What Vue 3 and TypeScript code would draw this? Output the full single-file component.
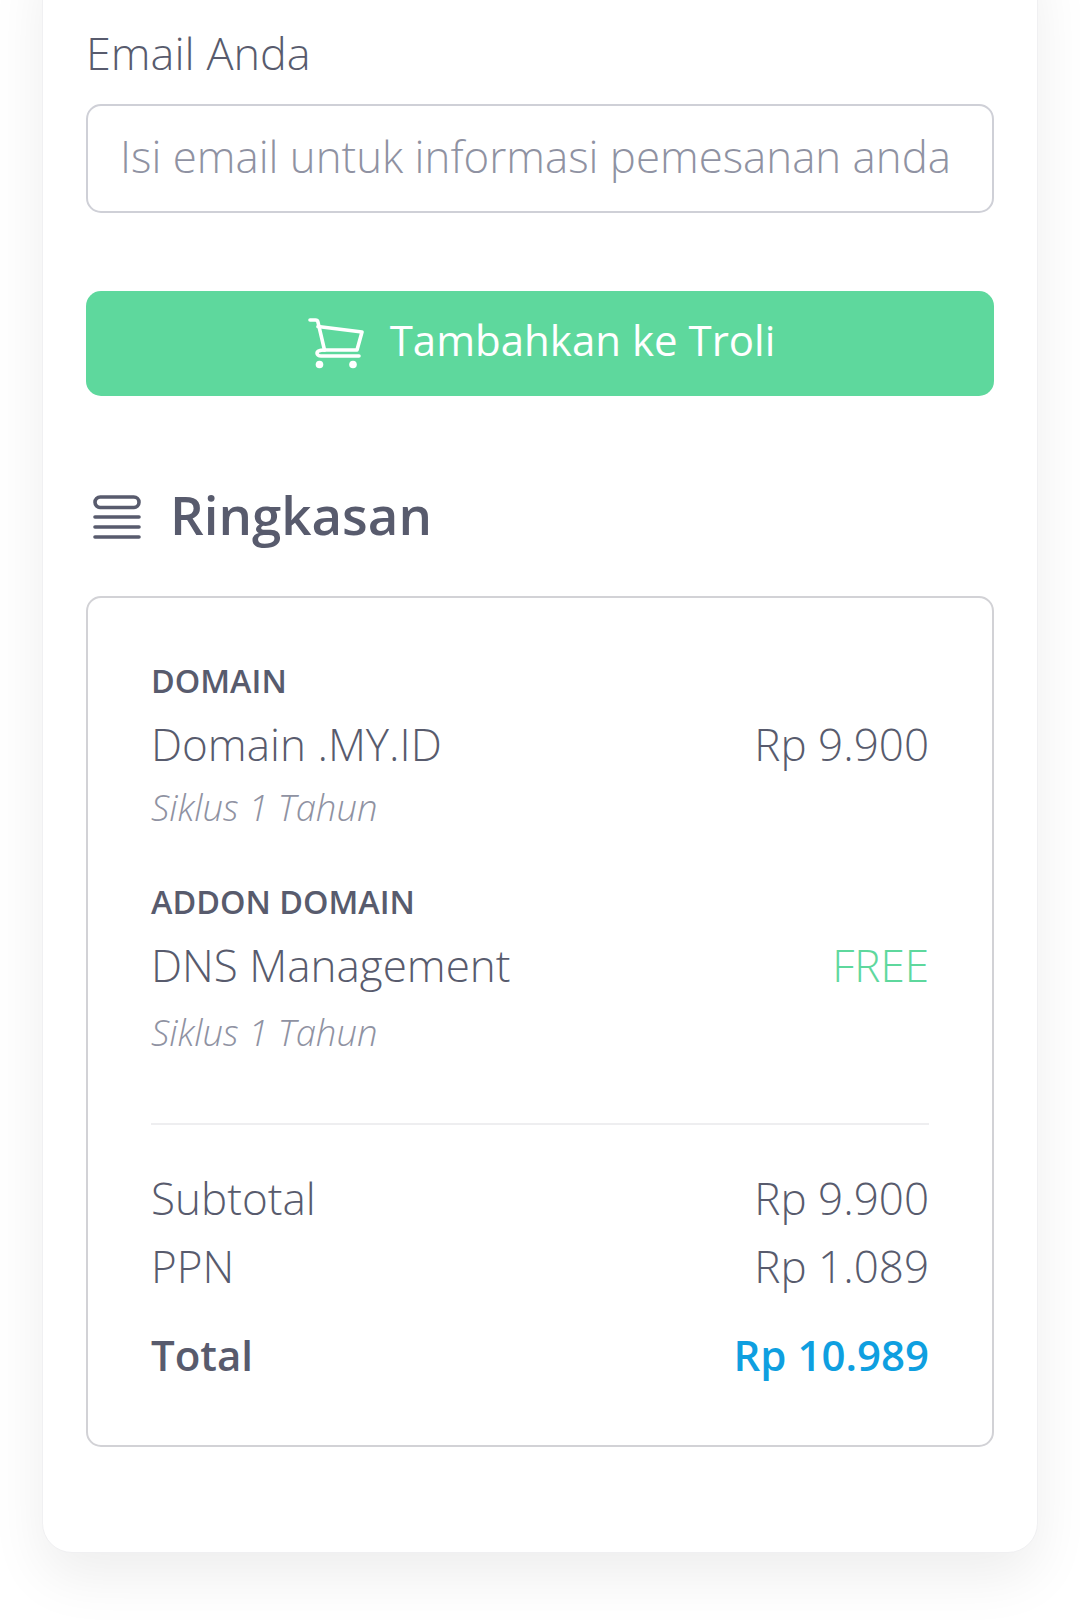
<script setup lang="ts">
interface Line { group: string; name: string; price: string; free?: boolean }
const lines: Line[] = [
  { group: 'DOMAIN', name: 'Domain .MY.ID', price: 'Rp 9.900' },
  { group: 'ADDON DOMAIN', name: 'DNS Management', price: 'FREE', free: true },
]
</script>

<template>
  <div class="page">
    <section class="card">
      <label class="label" for="email">Email Anda</label>
      <input id="email" class="input" type="text" placeholder="Isi email untuk informasi pemesanan anda" />
      <button class="cta" type="button">
        <svg class="cart" viewBox="0 0 56 51" fill="none" stroke="#fff" stroke-width="3.6" stroke-linecap="round" stroke-linejoin="round">
          <path d="M2 2h5.500c1.300 0 2.100.7 2.400 1.900L16.500 32" />
          <path d="M10 8.500 54 14l-5 18H16.500" />
          <path d="M51 38H13c-2.500 0-4-1.300-4-3 0-1.800 2.500-3 7.500-3" />
          <circle cx="11.500" cy="46.500" r="3.800" fill="#fff" stroke="none" />
          <circle cx="45" cy="46.500" r="3.800" fill="#fff" stroke="none" />
        </svg>
        <span class="cta-text">Tambahkan ke Troli</span>
      </button>
      <h2 class="heading">
        <svg class="list" viewBox="0 0 48 44" fill="none" stroke="#585b6d" stroke-width="3.600" stroke-linecap="round">
          <rect x="2" y="2" width="44" height="10.500" rx="5.250" />
          <path d="M2 22h44M2 32h44M2 42h44" />
        </svg>
        <span class="heading-text">Ringkasan</span>
      </h2>
      <div class="summary">
        <div v-for="l in lines" :key="l.group" class="item">
          <div class="group">{{ l.group }}</div>
          <div class="row">
            <span>{{ l.name }}</span>
            <span :class="{ free: l.free }">{{ l.price }}</span>
          </div>
          <div class="cycle">Siklus 1 Tahun</div>
        </div>
        <hr class="rule" />
        <div class="row"><span>Subtotal</span><span>Rp 9.900</span></div>
        <div class="row"><span>PPN</span><span>Rp 1.089</span></div>
        <div class="row total"><span>Total</span><span class="amount">Rp 10.989</span></div>
      </div>
    </section>
  </div>
</template>

<style>
html, body { margin: 0; background: #fff; }
</style>

<style scoped>
.page {
  height: 1624px;
  overflow: hidden;
  padding: 0 42px;
  box-sizing: border-box;
  background: #fff;
  font-family: "Open Sans", "Noto Sans", sans-serif;
  color: #585b6d;
}
.card {
  margin-top: -60px;
  height: 1613px;
  box-sizing: border-box;
  padding: 84px 43px 0;
  background: #fff;
  border-radius: 30px;
  border: 1px solid #f0f0f2;
  box-shadow: 0 24px 56px rgba(0, 0, 0, 0.07);
}
.label {
  display: block;
  font-size: 45px;
  line-height: 56px;
  font-weight: 300;
  margin-bottom: 23px;
}
.input {
  display: block;
  width: 100%;
  height: 109px;
  box-sizing: border-box;
  border: 2px solid #cfd0d7;
  border-radius: 15px;
  padding: 0 32px 6px;
  font: 300 43.8px "Open Sans", sans-serif;
  color: #585b6d;
  background: #fff;
  outline: none;
}
.input::placeholder { color: #8f92a2; opacity: 1; }
.cta {
  display: flex;
  align-items: center;
  justify-content: center;
  gap: 26px;
  width: 100%;
  height: 105px;
  margin-top: 78px;
  padding: 0 0 0 3px;
  border: 0;
  border-radius: 15px;
  background: #5ed89d;
  color: #fff;
  font: 400 42px "Open Sans", sans-serif;
}
.cta-text { padding-bottom: 8px; }
.cart { width: 56px; height: 51px; flex: none; }
.heading {
  display: flex;
  align-items: center;
  gap: 29px;
  margin: 91px 0 0;
  height: 60px;
  font-size: 52.8px;
  font-weight: 600;
}
.heading-text { padding-bottom: 6px; }
.list { width: 48px; height: 44px; margin-left: 7px; flex: none; }
.summary {
  margin-top: 49px;
  height: 851px;
  box-sizing: border-box;
  border: 2px solid #d2d2d6;
  border-radius: 15px;
  padding: 60px 63px 0 63px;
}
.item { margin-bottom: 46px; }
.item + .item { margin-bottom: 0; }
.group { font-size: 32.4px; line-height: 44px; font-weight: 600; margin-bottom: 8px; }
.row {
  display: flex;
  justify-content: space-between;
  font-size: 44px;
  line-height: 68px;
  font-weight: 300;
}
.free { color: #5ed89d; }
.cycle { margin-top: 3px; font-size: 36.5px; line-height: 52px; font-weight: 300; font-style: italic; color: #8f92a2; }
.item + .item .cycle { margin-top: 7px; }
.rule { border: 0; border-top: 2px solid #eeeef0; margin: 65px 0 39px; }
.total { font-size: 42px; font-weight: 600; margin-top: 21px; }
.amount { color: #0f9fe0; }
</style>
